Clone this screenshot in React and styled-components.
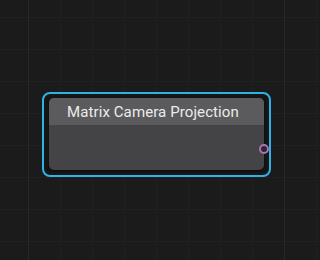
import React from "react";
import styled, { createGlobalStyle } from "styled-components";

const GlobalStyle = createGlobalStyle`
  html, body {
    margin: 0;
    padding: 0;
    background: #1b1b1b;
    font-family: Roboto, "Liberation Sans", sans-serif;
  }
  *, *::before, *::after {
    box-sizing: border-box;
  }
`;

const Canvas = styled.div`
  position: relative;
  width: 320px;
  height: 260px;
  overflow: hidden;
  background-color: #1b1b1b;
  background-image:
    linear-gradient(to right, #272727 0, #272727 1px, transparent 1px),
    linear-gradient(to right, #202020 0, #202020 1px, transparent 1px),
    linear-gradient(to bottom, #202020 0, #202020 1px, transparent 1px);
  background-size: 256px 100%, 32px 32px, 32px 32px;
  background-position: 28px 0, 28px 17px, 28px 17px;
`;

const Selection = styled.div`
  position: absolute;
  left: ${(p) => p.x}px;
  top: ${(p) => p.y}px;
  width: 229px;
  height: 85px;
  border: 2px solid #2fb3e6;
  border-radius: 8px;
  padding: 4px 5px 5px 5px;
  background: #161616;
`;

const Node = styled.div`
  position: relative;
  display: flex;
  flex-direction: column;
  height: 72px;
  border-radius: 5px;
  background: #444446;
  box-shadow: 0 1px 3px rgba(0, 0, 0, 0.6);
`;

const Header = styled.div`
  display: flex;
  align-items: center;
  height: 27px;
  padding-left: 18px;
  border-radius: 5px 5px 0 0;
  background: #5b5b5d;
  color: #ececec;
  font-size: 15px;
  letter-spacing: 0.1px;
`;

const Socket = styled.div`
  position: absolute;
  right: -5px;
  top: ${(p) => p.top}px;
  width: 10px;
  height: 10px;
  border-radius: 50%;
  border: 2px solid ${(p) => p.color};
  background: #2a2a2c;
`;

export default function App() {
  return (
    <>
      <GlobalStyle />
      <Canvas>
        <Selection x={42} y={92}>
          <Node>
            <Header>Matrix Camera Projection</Header>
            <Socket top={46} color="#b072b6" />
          </Node>
        </Selection>
      </Canvas>
    </>
  );
}
